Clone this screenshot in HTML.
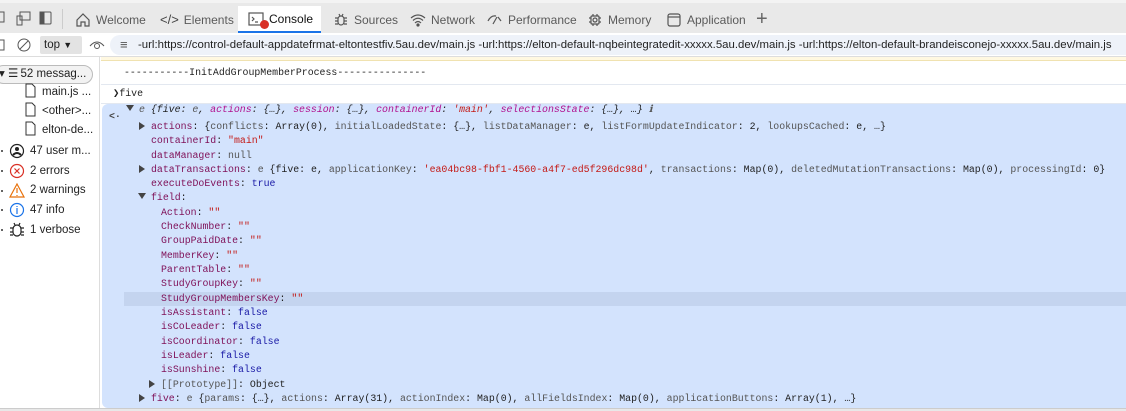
<!DOCTYPE html>
<html><head><meta charset="utf-8"><style>
*{margin:0;padding:0;box-sizing:border-box}
body{width:1126px;height:411px;overflow:hidden;background:#fff;font-family:"Liberation Sans",sans-serif;position:relative;color:#1f1f1f}
.abs{position:absolute}
#tabs{left:0;top:0;width:1126px;height:33px;background:#e9e9e9;border-top:3px solid #f3f3f3}
.tab{position:absolute;top:3px;height:27px;font-size:12px;color:#5a5a5a;display:flex;align-items:center;gap:5px}
.tab svg{stroke:#555;fill:none;stroke-width:1.2}
#filter{left:0;top:33px;width:1126px;height:24px;background:#fff;border-bottom:1px solid #ddd}
.urlbox{position:absolute;left:110px;top:2px;width:1016px;height:20px;background:#eef2f9;border-radius:10px 0 0 10px;font-size:11.4px;color:#222;line-height:20px;padding-left:28px;white-space:nowrap;overflow:hidden}
#side{left:0;top:57px;width:100px;height:354px;border-right:1px solid #ddd;font-size:11.5px;color:#222}
.si{position:absolute;white-space:nowrap}
.ic{position:absolute;left:9px;width:14px;height:14px}
.mono{font-family:"Liberation Mono",monospace;font-size:9.9px;white-space:nowrap}
.k{color:#881280}.kk{color:#7f1058}.s{color:#b1108e}.str{color:#c41a16}.n{color:#1a1aa6}.g{color:#555}
.row{position:absolute;height:14px;line-height:14px}
.tri{display:inline-block;width:0;height:0;border-left:6px solid #444;border-top:4px solid transparent;border-bottom:4px solid transparent;margin-right:6px;vertical-align:-1px}
.trid{display:inline-block;width:0;height:0;border-top:6px solid #444;border-left:4px solid transparent;border-right:4px solid transparent;margin-right:5px;vertical-align:1px}
</style></head><body>
<div id="tabs" class="abs">
 <svg class="abs" style="left:0;top:7px" width="60" height="16" fill="none" stroke="#555"><rect x="-4" y="2" width="8" height="10"/><rect x="20" y="2" width="10" height="8"/><rect x="17" y="6" width="5" height="9"/><rect x="40" y="2" width="11" height="12" rx="1"/><rect x="40" y="2" width="4" height="12" fill="#555"/></svg>
 <div class="abs" style="left:62px;top:6px;width:1px;height:20px;background:#ccc"></div>
 <div class="tab" style="left:75px"><svg width="16" height="16"><path d="M2 8 L8 2 L14 8 V14 H10 V10 H6 V14 H2Z"/></svg>Welcome</div>
 <div class="tab" style="left:160px"><span style="font-size:13px;color:#444">&lt;/&gt;</span>Elements</div>
 <div class="tab" style="left:238px;width:83px;background:#fff;color:#111;padding-left:10px;top:3px;height:27px;border-bottom:2px solid #1a73e8"><svg width="16" height="16"><rect x="1" y="2" width="14" height="12"/><path d="M4 6 L6 8 L4 10 M7 11 H10"/></svg><span class="abs" style="left:22px;top:14px;width:9px;height:9px;border-radius:50%;background:#d93025"></span>Console</div>
 <div class="tab" style="left:333px"><svg width="16" height="16"><rect x="5" y="4" width="6" height="9" rx="3"/><path d="M2 6H5M2 9H5M2 12H5M11 6H14M11 9H14M11 12H14M6 2L7 4M10 2L9 4"/></svg>Sources</div>
 <div class="tab" style="left:410px"><svg width="16" height="16"><path d="M1 6 Q8 0 15 6 M3 8.5 Q8 4 13 8.5 M5 11 Q8 8 11 11"/><circle cx="8" cy="13" r="1" fill="#444"/></svg>Network</div>
 <div class="tab" style="left:487px"><svg width="16" height="16"><path d="M1 9 Q4 3 9 4 M6 12 L10 5 M11 5 L14 9"/></svg>Performance</div>
 <div class="tab" style="left:587px"><svg width="16" height="16"><rect x="4" y="4" width="8" height="8" rx="1"/><circle cx="8" cy="8" r="2"/><path d="M2 6H4M2 10H4M12 6H14M12 10H14M6 2V4M10 2V4M6 12V14M10 12V14"/></svg>Memory</div>
 <div class="tab" style="left:666px"><svg width="16" height="16"><rect x="2" y="2" width="12" height="12" rx="2"/><path d="M2 5H14"/></svg>Application</div>
 <div class="tab" style="left:756px;font-size:20px;color:#666">+</div>
</div>
<div id="filter" class="abs">
 <svg class="abs" style="left:0;top:5px" width="110" height="16" fill="none" stroke="#555"><rect x="-3" y="2" width="7" height="10"/><circle cx="24" cy="7" r="6"/><path d="M20 11 L28 3"/></svg>
 <div class="abs" style="left:40px;top:3px;width:42px;height:18px;background:#e3e3e3;border-radius:2px;font-size:11.5px;line-height:18px;padding-left:4px">top <span style="font-size:9px">▼</span></div>
 <svg class="abs" style="left:89px;top:6px" width="16" height="12" fill="none" stroke="#555"><path d="M1 7 Q8 -1 15 7"/><circle cx="8" cy="7" r="2.5"/></svg>
 <div class="urlbox"><span class="abs" style="left:10px;top:0;color:#555;font-size:13px">≡</span>-url:https://control-default-appdatefrmat-eltontestfiv.5au.dev/main.js -url:https://elton-default-nqbeintegratedit-xxxxx.5au.dev/main.js -url:https://elton-default-brandeisconejo-xxxxx.5au.dev/main.js</div>
</div>
<div id="side" class="abs">
 <div class="si" style="left:-6px;top:8px;width:99px;height:19px;border:1px solid #bbb;border-radius:10px;background:#f2f2f2;line-height:17px;padding-left:4px">▾ <span style="letter-spacing:-1px">☰</span> 52 messag...</div>
 <svg class="abs" style="left:25px;top:26px" width="12" height="60" fill="none" stroke="#333"><path d="M1 1H7L10 4V14H1Z M1 20H7L10 23V33H1Z M1 39H7L10 42V52H1Z"/></svg>
 <div class="si" style="left:42px;top:29px">main.js ...</div>
 <div class="si" style="left:42px;top:48px">&lt;other&gt;...</div>
 <div class="si" style="left:42px;top:67px">elton-de...</div>
 <svg class="abs" style="left:0;top:86px" width="28" height="180" fill="none" stroke-width="1.2">
  <circle cx="2" cy="8" r="1" fill="#333"/><circle cx="17" cy="8" r="6.5" stroke="#222"/><circle cx="17" cy="6" r="2" fill="#222"/><path d="M13 12 Q17 8 21 12" stroke="#222" stroke-width="2"/>
  <circle cx="2" cy="28" r="1" fill="#333"/><circle cx="17" cy="28" r="6.5" stroke="#d93025"/><path d="M14.5 25.5L19.5 30.5M19.5 25.5L14.5 30.5" stroke="#d93025"/>
  <circle cx="2" cy="48" r="1" fill="#333"/><path d="M17 41 L24 54 H10 Z M17 45V50M17 52V53" stroke="#e8710a"/>
  <circle cx="2" cy="67" r="1" fill="#333"/><circle cx="17" cy="67" r="6.5" stroke="#1a73e8"/><path d="M17 65V71M17 63V64" stroke="#1a73e8"/>
  <circle cx="2" cy="87" r="1" fill="#333"/><rect x="13" y="82" width="8" height="11" rx="4" stroke="#222"/><path d="M10 85H13M10 89H13M21 85H24M21 89H24M10 92H13M21 92H24M14 80L15 82M20 80L19 82" stroke="#222"/>
 </svg>
 <div class="si" style="left:30px;top:88px">47 user m...</div>
 <div class="si" style="left:30px;top:108px">2 errors</div>
 <div class="si" style="left:30px;top:127px">2 warnings</div>
 <div class="si" style="left:30px;top:147px">47 info</div>
 <div class="si" style="left:30px;top:167px">1 verbose</div>
</div>
<!-- console -->
<div class="abs" style="left:101px;top:57px;width:1025px;height:4px;background:#fff8e1;border-bottom:1px solid #f0e2b0"></div>
<div class="abs mono" style="left:124px;top:66px;height:14px;line-height:14px">-----------InitAddGroupMemberProcess---------------</div>
<div class="abs" style="left:101px;top:84px;width:1025px;height:1px;background:#e3e8f0"></div>
<div class="abs mono" style="left:113px;top:87px;line-height:14px;font-size:10.5px">❯<span style="font-size:9.9px">five</span></div>
<div class="abs" style="left:101px;top:103px;width:1025px;height:1px;background:#e3e8f0"></div>
<div class="abs" style="left:102px;top:104px;width:1024px;height:304px;background:#d3e3fd;border-radius:6px 0 0 6px"></div>
<div class="abs" style="left:124px;top:292px;width:1002px;height:14px;background:#c4d4ef"></div>
<div class="abs" style="left:0;top:408px;width:1126px;height:3px;background:#e8e8e8;border-top:1px solid #ccc"></div>
<div class="mono">
<div class="row" style="left:109px;top:110px;color:#444;font-weight:bold">&lt;·</div>
<div class="row" style="left:126px;top:103px;font-style:italic"><span class="trid"></span><span class="g">e</span> {five: <span class="g">e</span>, <span class="s">actions</span>: {…}, <span class="s">session</span>: {…}, <span class="s">containerId</span>: <span class="str">'main'</span>, <span class="s">selectionsState</span>: {…}, …} <span class="g">ℹ</span></div>
<div class="row" style="left:139px;top:120px"><span class="tri"></span><span class="kk">actions</span>: {<span class="g">conflicts</span>: Array(0), <span class="g">initialLoadedState</span>: {…}, <span class="g">listDataManager</span>: e, <span class="g">listFormUpdateIndicator</span>: 2, <span class="g">lookupsCached</span>: e, …}</div>
<div class="row" style="left:151px;top:134px"><span class="kk">containerId</span>: <span class="str">"main"</span></div>
<div class="row" style="left:151px;top:149px"><span class="kk">dataManager</span>: <span class="g">null</span></div>
<div class="row" style="left:139px;top:163px"><span class="tri"></span><span class="kk">dataTransactions</span>: <span class="g">e</span> {five: e, <span class="g">applicationKey</span>: <span class="str">'ea04bc98-fbf1-4560-a4f7-ed5f296dc98d'</span>, <span class="g">transactions</span>: Map(0), <span class="g">deletedMutationTransactions</span>: Map(0), <span class="g">processingId</span>: 0}</div>
<div class="row" style="left:151px;top:177px"><span class="kk">executeDoEvents</span>: <span class="n">true</span></div>
<div class="row" style="left:138px;top:191px"><span class="trid"></span><span class="kk">field</span>:</div>
<div class="row" style="left:161px;top:206px"><span class="kk">Action</span>: <span class="str">""</span></div>
<div class="row" style="left:161px;top:220px"><span class="kk">CheckNumber</span>: <span class="str">""</span></div>
<div class="row" style="left:161px;top:234px"><span class="kk">GroupPaidDate</span>: <span class="str">""</span></div>
<div class="row" style="left:161px;top:249px"><span class="kk">MemberKey</span>: <span class="str">""</span></div>
<div class="row" style="left:161px;top:263px"><span class="kk">ParentTable</span>: <span class="str">""</span></div>
<div class="row" style="left:161px;top:277px"><span class="kk">StudyGroupKey</span>: <span class="str">""</span></div>
<div class="row" style="left:161px;top:292px"><span class="kk">StudyGroupMembersKey</span>: <span class="str">""</span></div>
<div class="row" style="left:161px;top:306px"><span class="kk">isAssistant</span>: <span class="n">false</span></div>
<div class="row" style="left:161px;top:320px"><span class="kk">isCoLeader</span>: <span class="n">false</span></div>
<div class="row" style="left:161px;top:335px"><span class="kk">isCoordinator</span>: <span class="n">false</span></div>
<div class="row" style="left:161px;top:349px"><span class="kk">isLeader</span>: <span class="n">false</span></div>
<div class="row" style="left:161px;top:363px"><span class="kk">isSunshine</span>: <span class="n">false</span></div>
<div class="row" style="left:149px;top:378px"><span class="tri"></span><span class="g">[[Prototype]]</span>: Object</div>
<div class="row" style="left:139px;top:392px"><span class="tri"></span><span class="kk">five</span>: <span class="g">e</span> {<span class="g">params</span>: {…}, <span class="g">actions</span>: Array(31), <span class="g">actionIndex</span>: Map(0), <span class="g">allFieldsIndex</span>: Map(0), <span class="g">applicationButtons</span>: Array(1), …}</div>
</div>
</body></html>
